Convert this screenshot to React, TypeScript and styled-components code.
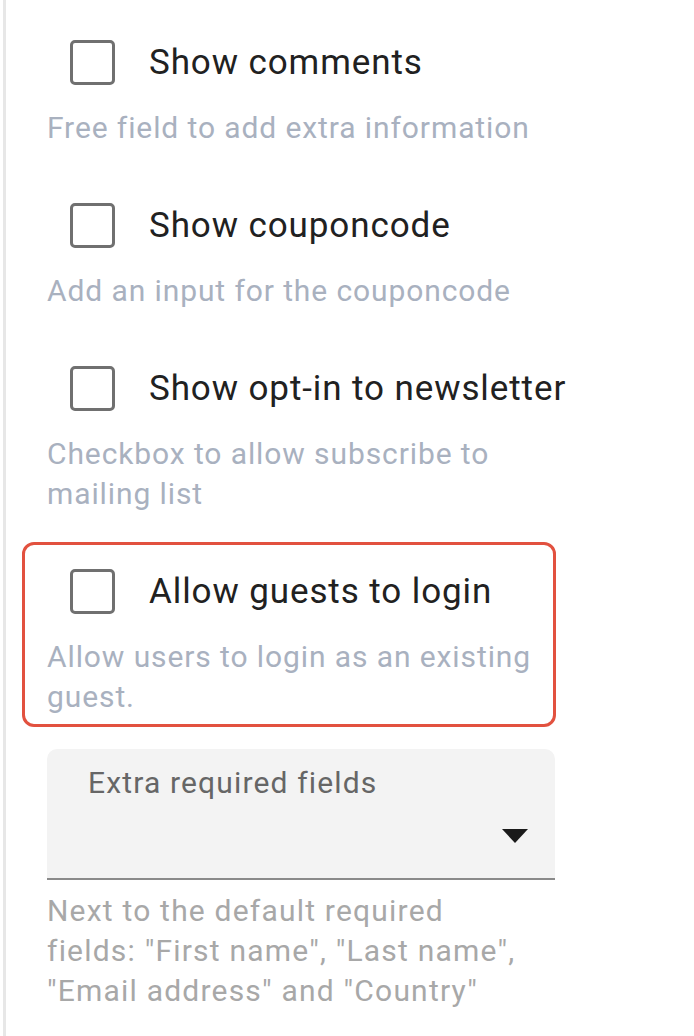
import React from "react";
import styled, { createGlobalStyle } from "styled-components";

const GlobalStyle = createGlobalStyle`
  body {
    margin: 0;
    background: #ffffff;
    font-family: Roboto, "Liberation Sans", sans-serif;
  }
`;

const Panel = styled.div`
  margin-left: 3px;
  border-left: 3px solid #e7e7e7;
  padding: 40px 0 40px 41px;
  min-height: 956px;
  width: 508px;
  display: flex;
  flex-direction: column;
  gap: 55px;
`;

const Section = styled.div<{ $highlight?: boolean }>`
  position: relative;
  display: flex;
  flex-direction: column;
  gap: 23px;

  ${(p) =>
    p.$highlight &&
    `
    &::before {
      content: "";
      position: absolute;
      top: -27px;
      bottom: -10px;
      left: -25px;
      right: -1px;
      border: 3px solid #e2513f;
      border-radius: 12px;
      pointer-events: none;
    }
  `}
`;

const CheckRow = styled.label`
  display: flex;
  align-items: center;
  height: 45px;
  padding-left: 23px;
  gap: 34px;
  cursor: pointer;
`;

const Box = styled.span`
  box-sizing: border-box;
  width: 45px;
  height: 45px;
  border: 3px solid #707070;
  border-radius: 5px;
  flex-shrink: 0;
`;

const Label = styled.span`
  font-size: 35px;
  color: #212121;
  letter-spacing: 0.9px;
  white-space: nowrap;
`;

const Description = styled.p`
  margin: 0;
  font-size: 30px;
  line-height: 40px;
  color: #a9b1bf;
  letter-spacing: 0.9px;
  max-width: 500px;
`;

const SelectWrap = styled.div`
  margin-top: -23px;
  display: flex;
  flex-direction: column;
  gap: 11px;
`;

const Select = styled.div`
  position: relative;
  box-sizing: border-box;
  height: 131px;
  background: #f3f3f3;
  border-radius: 10px 10px 0 0;
  border-bottom: 2px solid #8a8a8a;
  padding: 17px 41px 0;
`;

const SelectLabel = styled.div`
  font-size: 30px;
  line-height: 34px;
  color: #666666;
  letter-spacing: 1.15px;
`;

const Arrow = styled.svg`
  position: absolute;
  right: 27px;
  top: 80px;
  width: 26px;
  height: 14px;
`;

const Helper = styled.p`
  margin: 0;
  font-size: 30px;
  line-height: 40px;
  color: #a8a8a8;
  letter-spacing: 1.2px;
  max-width: 485px;
`;

const options = [
  { label: "Show comments", text: "Free field to add extra information" },
  { label: "Show couponcode", text: "Add an input for the couponcode" },
  {
    label: "Show opt-in to newsletter",
    text: "Checkbox to allow subscribe to mailing list",
  },
  {
    label: "Allow guests to login",
    text: "Allow users to login as an existing guest.",
    highlight: true,
  },
];

export default function App() {
  return (
    <>
      <GlobalStyle />
      <Panel>
        {options.map((o) => (
          <Section key={o.label} $highlight={o.highlight}>
            <CheckRow>
              <Box />
              <Label>{o.label}</Label>
            </CheckRow>
            <Description>{o.text}</Description>
          </Section>
        ))}
        <SelectWrap>
          <Select>
            <SelectLabel>Extra required fields</SelectLabel>
            <Arrow viewBox="0 0 26 14">
              <path d="M0 0 L26 0 L13 14 Z" fill="#1a1a1a" />
            </Arrow>
          </Select>
          <Helper>
            Next to the default required fields: "First name", "Last name",
            "Email address" and "Country"
          </Helper>
        </SelectWrap>
      </Panel>
    </>
  );
}
